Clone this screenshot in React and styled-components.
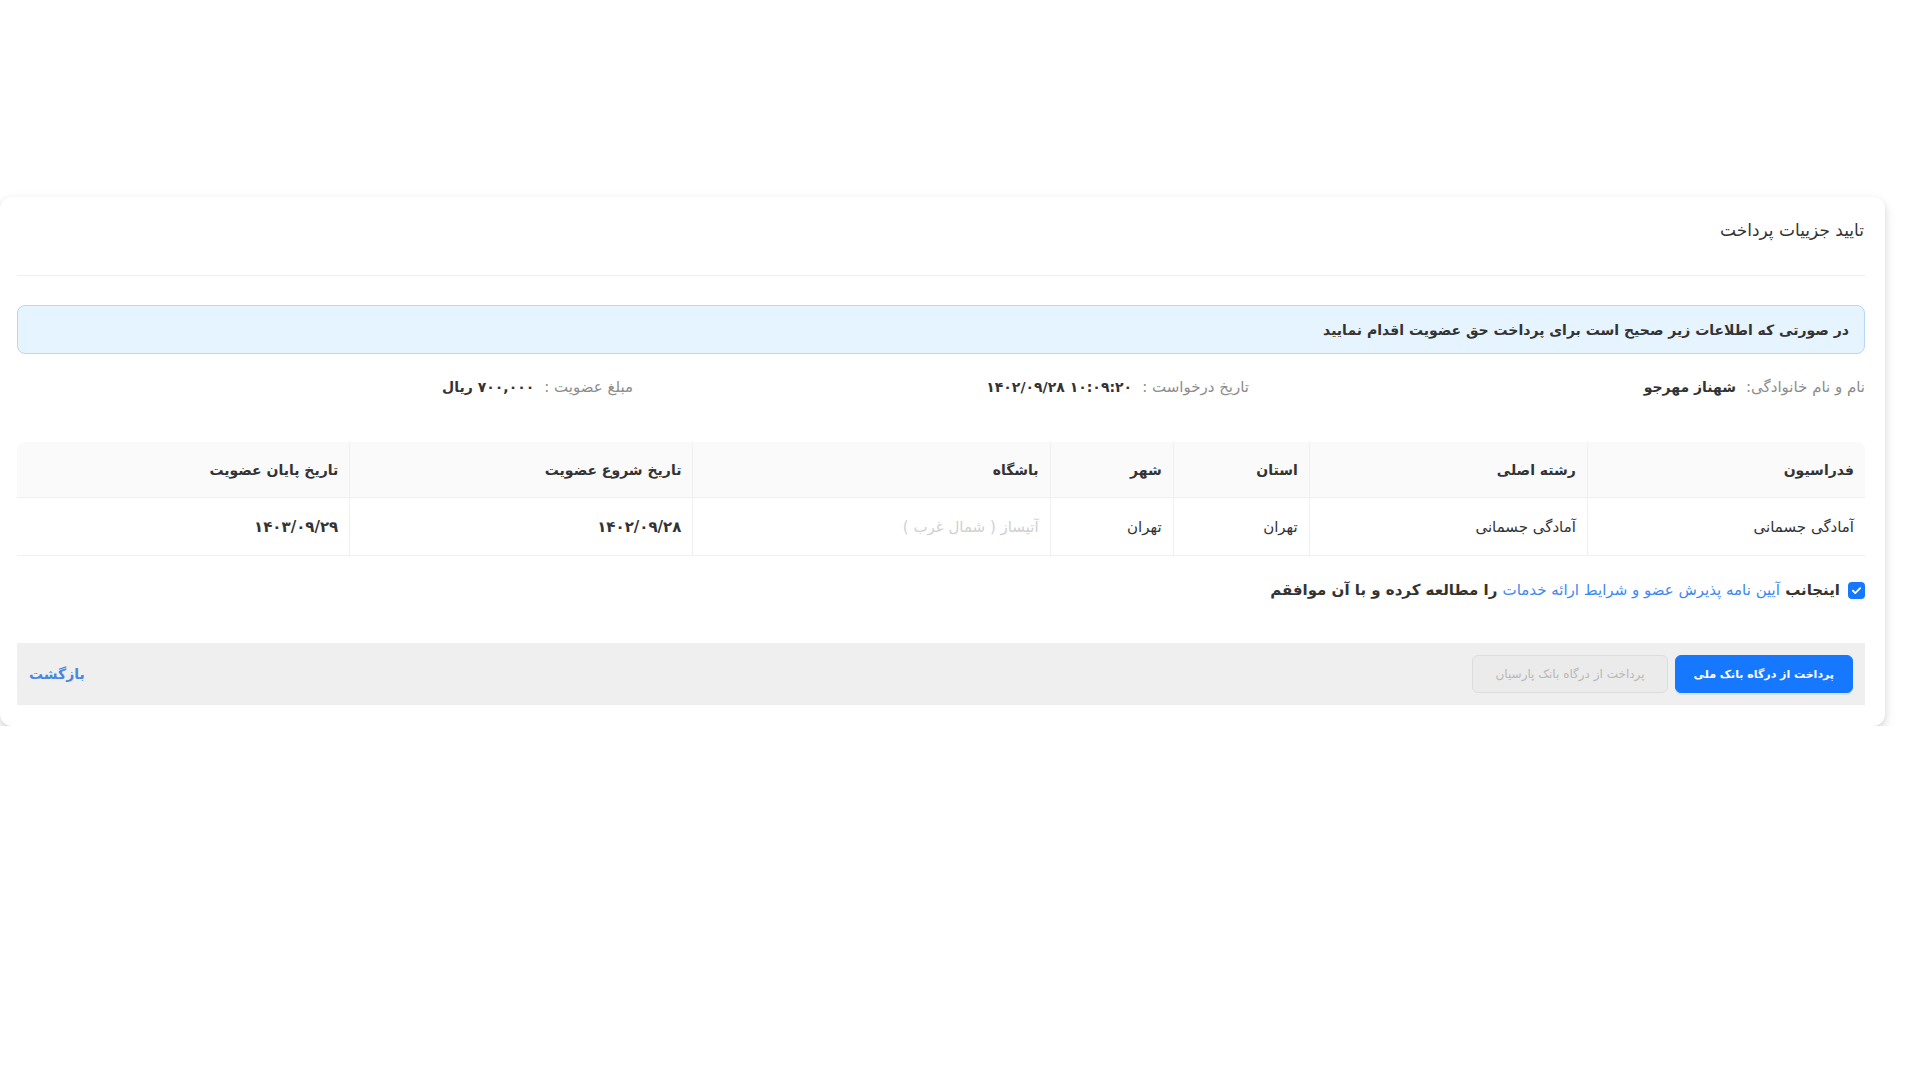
import React from 'react';
import styled, { createGlobalStyle } from 'styled-components';

const Global = createGlobalStyle`
  html, body { margin: 0; padding: 0; background: #fff; }
  body { font-family: "DejaVu Sans", "Noto Sans", sans-serif; color: #333; }
  * { box-sizing: border-box; }
`;

const Page = styled.div`
  direction: rtl;
  padding: 197px 35px 0 0;
`;

const Card = styled.section`
  background: #fff;
  border-radius: 12px;
  box-shadow: 0 1px 2px -2px rgba(0,0,0,0.16), 0 3px 6px 0 rgba(0,0,0,0.10), 0 5px 12px 2px rgba(0,0,0,0.07);
  padding: 0 20px 21px 17px;
`;

const Header = styled.header`
  height: 79px;
  padding: 21px 1px 0 0;
  border-bottom: 1px solid #efefef;
`;

const Title = styled.h1`
  margin: 0;
  font-size: 17px;
  line-height: 24px;
  font-weight: 400;
  color: #333;
`;

const Alert = styled.div`
  margin-top: 29px;
  height: 49px;
  display: flex;
  align-items: center;
  padding: 0 15px;
  background: #e6f4ff;
  border: 1px solid #b6d7f5;
  border-radius: 8px;
  font-size: 14px;
  font-weight: 700;
  color: #333;
`;

const InfoRow = styled.div`
  margin-top: 22px;
  display: grid;
  grid-template-columns: repeat(3, 1fr);
  height: 22px;
  align-items: center;
`;

const InfoItem = styled.div`
  display: flex;
  gap: 10px;
  align-items: center;
`;

const Label = styled.span`
  color: #8c8c8c;
  font-size: 15px;
`;

const Value = styled.span`
  font-size: 14px;
  font-weight: 700;
  color: #333;
  unicode-bidi: isolate;
  direction: ${(p) => (p.$ltr ? 'ltr' : 'rtl')};
`;

const Table = styled.table`
  margin-top: 44px;
  width: 100%;
  border-collapse: separate;
  border-spacing: 0;
  table-layout: fixed;
`;

const Th = styled.th`
  height: 56px;
  background: #fafafa;
  text-align: right;
  font-size: 14px;
  font-weight: 700;
  color: #333;
  padding: 0 11px;
  border-bottom: 1px solid #f0f0f0;
  border-left: 1px solid #f0f0f0;
  &:first-child { border-top-right-radius: 8px; }
  &:last-child { border-top-left-radius: 8px; border-left: none; }
`;

const Td = styled.td`
  height: 58px;
  text-align: right;
  padding: 0 11px;
  font-size: 15px;
  font-weight: ${(p) => (p.$num ? 700 : 400)};
  color: ${(p) => (p.$muted ? '#d0d0d0' : '#333')};
  border-bottom: 1px solid #f0f0f0;
  border-left: 1px solid #f0f0f0;
  &:last-child { border-left: none; }
`;

const Agree = styled.label`
  margin-top: 24px;
  display: flex;
  align-items: center;
  gap: 8px;
  height: 20px;
  font-size: 15px;
  font-weight: 700;
  color: #333;
`;

const Box = styled.span`
  width: 17px;
  height: 17px;
  border-radius: 4px;
  background: #1677ff;
  display: inline-flex;
  align-items: center;
  justify-content: center;
  flex: none;
`;

const Link = styled.a`
  color: #3d87f5;
  font-weight: 400;
  text-decoration: none;
`;

const Footer = styled.footer`
  margin-top: 43px;
  height: 62px;
  background: #efefef;
  display: flex;
  align-items: center;
  justify-content: space-between;
  padding: 0 12px;
`;

const Buttons = styled.div`
  display: flex;
  gap: 7px;
`;

const Button = styled.button`
  height: 38px;
  padding: 0 ${(p) => (p.$primary ? 18 : 22)}px;
  border-radius: 6px;
  font-family: inherit;
  font-size: ${(p) => (p.$primary ? 11 : 12)}px;
  font-weight: ${(p) => (p.$primary ? 700 : 400)};
  border: 1px solid ${(p) => (p.$primary ? '#1677ff' : '#dcdcdc')};
  background: ${(p) => (p.$primary ? '#1677ff' : '#ebebeb')};
  color: ${(p) => (p.$primary ? '#fff' : '#b8b8b8')};
  cursor: ${(p) => (p.$primary ? 'pointer' : 'not-allowed')};
  box-shadow: ${(p) => (p.$primary ? '0 2px 0 rgba(5,145,255,0.1)' : 'none')};
`;

const Back = styled.a`
  color: #4a86e0;
  font-size: 14px;
  font-weight: 700;
  text-decoration: none;
`;

const cols = [
  { t: 'فدراسیون', w: 278 },
  { t: 'رشته اصلی', w: 278 },
  { t: 'استان', w: 136 },
  { t: 'شهر', w: 123 },
  { t: 'باشگاه', w: 357 },
  { t: 'تاریخ شروع عضویت', w: 343 },
  { t: 'تاریخ پایان عضویت', w: 332 },
];

export default function App() {
  return (
    <>
      <Global />
      <Page>
        <Card>
          <Header>
            <Title>تایید جزییات پرداخت</Title>
          </Header>
          <Alert>در صورتی که اطلاعات زیر صحیح است برای پرداخت حق عضویت اقدام نمایید</Alert>
          <InfoRow>
            <InfoItem>
              <Label>نام و نام خانوادگی:</Label>
              <Value>شهناز مهرجو</Value>
            </InfoItem>
            <InfoItem>
              <Label>تاریخ درخواست :</Label>
              <Value $ltr>۱۴۰۲/۰۹/۲۸ ۱۰:۰۹:۲۰</Value>
            </InfoItem>
            <InfoItem>
              <Label>مبلغ عضویت :</Label>
              <Value>۷۰۰,۰۰۰ ریال</Value>
            </InfoItem>
          </InfoRow>
          <Table>
            <colgroup>
              {cols.map((c) => (
                <col key={c.t} style={{ width: c.w }} />
              ))}
            </colgroup>
            <thead>
              <tr>
                {cols.map((c) => (
                  <Th key={c.t}>{c.t}</Th>
                ))}
              </tr>
            </thead>
            <tbody>
              <tr>
                <Td>آمادگی جسمانی</Td>
                <Td>آمادگی جسمانی</Td>
                <Td>تهران</Td>
                <Td>تهران</Td>
                <Td $muted>آتیساز ( شمال غرب )</Td>
                <Td $num>۱۴۰۲/۰۹/۲۸</Td>
                <Td $num>۱۴۰۳/۰۹/۲۹</Td>
              </tr>
            </tbody>
          </Table>
          <Agree>
            <Box>
              <svg width="11" height="11" viewBox="0 0 12 12" fill="none">
                <path d="M2 6.2l2.6 2.6L10 3.4" stroke="#fff" strokeWidth="2" strokeLinecap="round" strokeLinejoin="round" />
              </svg>
            </Box>
            <span>
              اینجانب <Link href="#">آیین نامه پذیرش عضو و شرایط ارائه خدمات</Link> را مطالعه کرده و با آن موافقم
            </span>
          </Agree>
          <Footer>
            <Buttons>
              <Button $primary>پرداخت از درگاه بانک ملی</Button>
              <Button disabled>پرداخت از درگاه بانک پارسیان</Button>
            </Buttons>
            <Back href="#">بازگشت</Back>
          </Footer>
        </Card>
      </Page>
    </>
  );
}
